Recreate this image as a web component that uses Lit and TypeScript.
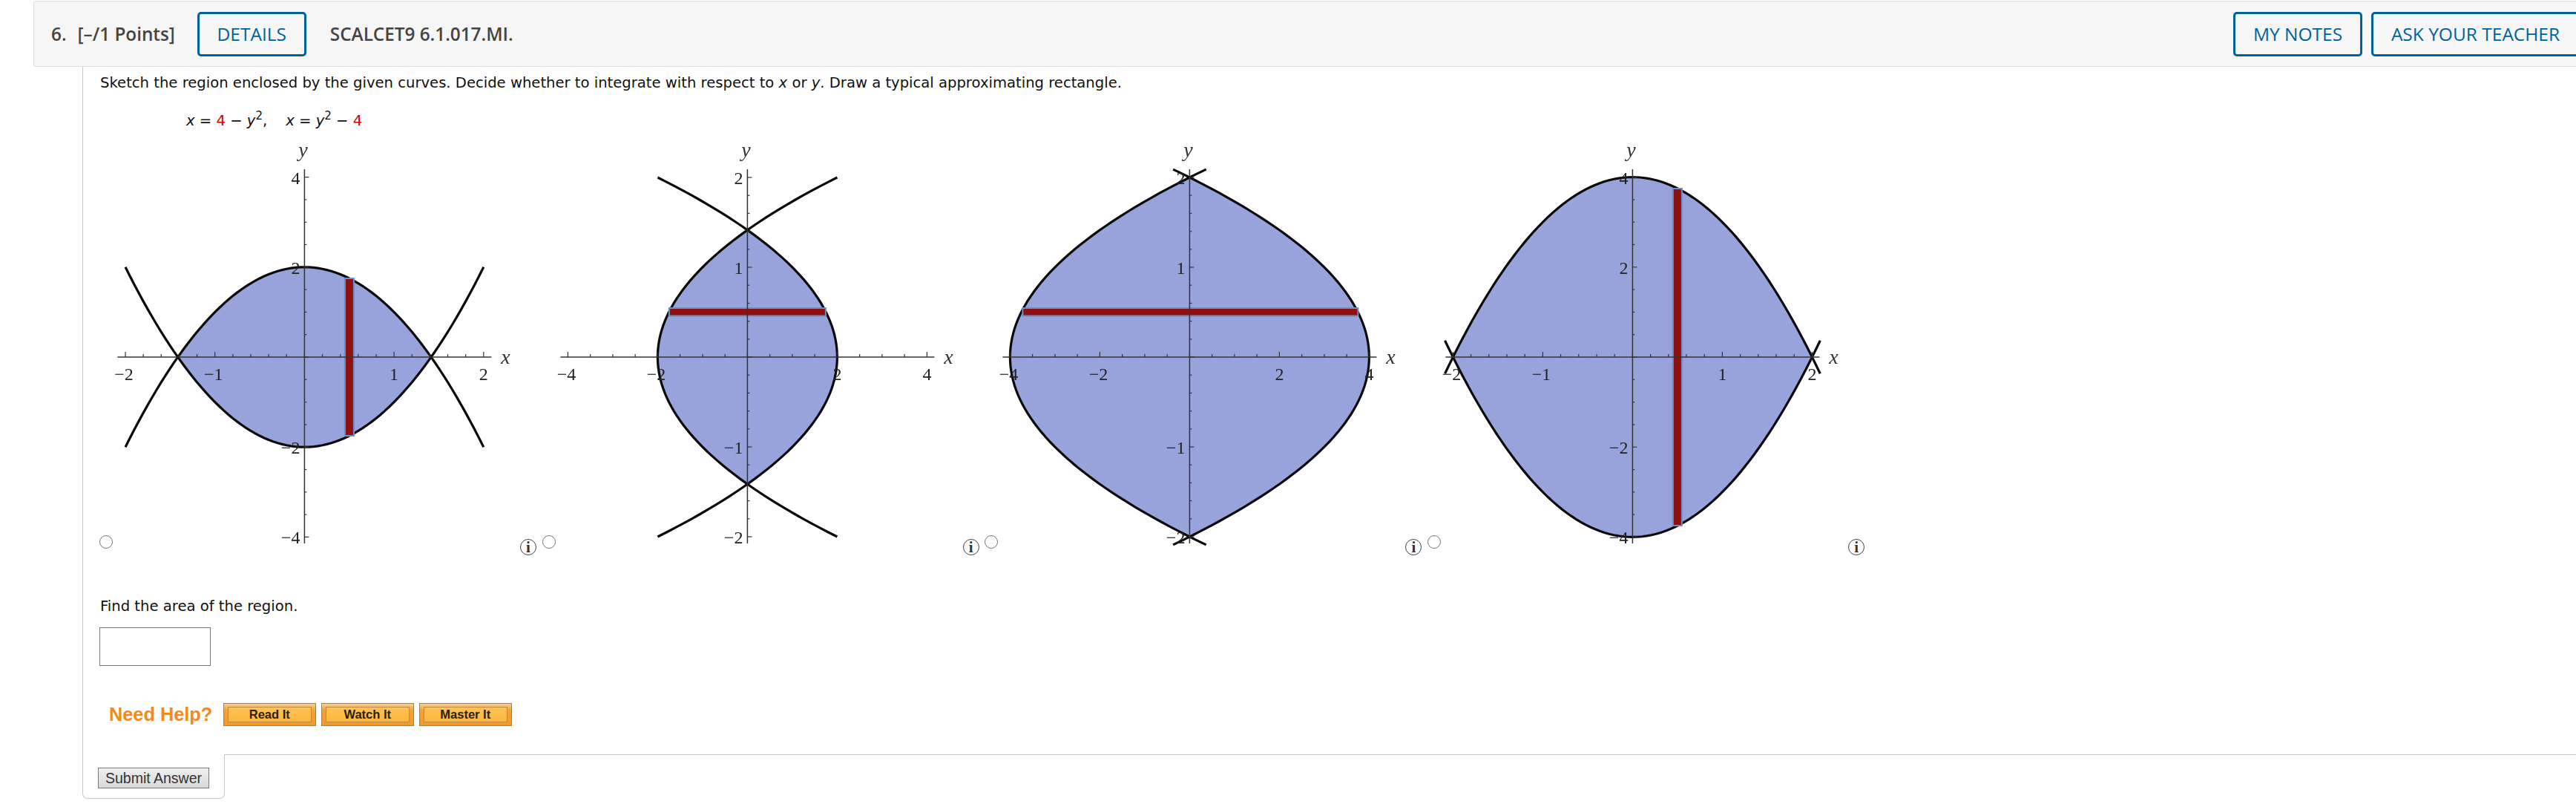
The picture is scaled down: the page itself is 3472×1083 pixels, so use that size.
/**
 * Homework question: sketch the region enclosed by two parabolas
 */

import { LitElement, css, html, svg } from "lit";
import { customElement } from "lit/decorators.js";

interface Plot {
	// "y" means y = a - x^2 over x, "x" means x = a - y^2 over y
	along: "x" | "y";
	a: number;
	range: number;
	sx: number;
	sy: number;
	xMinor: number;
	yMinor: number;
	xLabels: number[];
	yLabels: number[];
	bar: [number, number, number, number];
}

const CX = 258.4;
const CY = 297;
const LEFT = -252;
const RIGHT = 252;
const TOP = -253;
const BOTTOM = 251;

const PLOTS: Plot[] = [
	{
		along: "y",
		a: 2,
		range: 2,
		sx: 120.7,
		sy: 60.6,
		xMinor: 0.2,
		yMinor: 0.5,
		xLabels: [-2, -1, 1, 2],
		yLabels: [-4, -2, 2, 4],
		bar: [55.5, -105, 10, 210],
	},
	{
		along: "x",
		a: 2,
		range: 2,
		sx: 60.5,
		sy: 121,
		xMinor: 0.5,
		yMinor: 0.2,
		xLabels: [-4, -2, 2, 4],
		yLabels: [-2, -1, 1, 2],
		bar: [-104.5, -65, 209, 8.5],
	},
	{
		along: "x",
		a: 4,
		range: 2.09,
		sx: 60.5,
		sy: 121,
		xMinor: 0.5,
		yMinor: 0.2,
		xLabels: [-4, -2, 2, 4],
		yLabels: [-2, -1, 1, 2],
		bar: [-224, -65, 450, 8.5],
	},
	{
		along: "y",
		a: 4,
		range: 2.09,
		sx: 121,
		sy: 60.6,
		xMinor: 0.2,
		yMinor: 0.5,
		xLabels: [-2, -1, 1, 2],
		yLabels: [-4, -2, 2, 4],
		bar: [55.5, -226, 10, 452],
	},
];

function ticks(max: number, step: number) {
	const out: number[] = [];
	const n = Math.floor(max / step + 0.001);
	for (let i = -n; i <= n; i++) out.push(i * step);
	return out;
}

function curve(p: Plot, sign: number, from: number, to: number) {
	const pts: string[] = [];
	for (let i = 0; i <= 80; i++) {
		const t = from + ((to - from) * i) / 80;
		const v = sign * (p.a - t * t);
		const px = p.along === "y" ? t * p.sx : v * p.sx;
		const py = p.along === "y" ? -v * p.sy : -t * p.sy;
		pts.push(`${px.toFixed(2)},${py.toFixed(2)}`);
	}
	return pts;
}

function renderPlot(p: Plot) {
	const root = Math.sqrt(p.a);
	const region = [...curve(p, 1, -root, root), ...curve(p, -1, root, -root)].join(" ");
	const xMax = p.along === "y" ? 2 : 4;
	const yMax = p.along === "y" ? 4 : 2;
	const [bx, by, bw, bh] = p.bar;
	return html`
		<svg class="plot" width="549" height="564" viewBox="0 0 549 564">
			<g transform="translate(${CX} ${CY})">
				${svg`
					<polygon points=${region} fill="#99a3db"></polygon>
					<polyline class="curve" points=${curve(p, 1, -p.range, p.range).join(" ")}></polyline>
					<polyline class="curve" points=${curve(p, -1, -p.range, p.range).join(" ")}></polyline>
					<rect x=${bx - 2} y=${by - 2} width=${bw + 4} height=${bh + 4} fill="#6f8fc4"></rect>
					<rect x=${bx} y=${by} width=${bw} height=${bh} fill="#8f1010"></rect>
					<line class="axis" x1=${LEFT} x2=${RIGHT} y1="0" y2="0"></line>
					<line class="axis" x1="0" x2="0" y1=${TOP} y2=${BOTTOM}></line>
					${ticks(xMax, p.xMinor).map((t) => {
						const major = Math.abs(t - Math.round(t)) < 0.001 && (p.along === "y" || Math.round(t) % 2 === 0);
						return svg`<line class="tick" x1=${t * p.sx} x2=${t * p.sx} y1="0" y2=${major ? -7 : -4}></line>`;
					})}
					${ticks(yMax, p.yMinor).map((t) => {
						const major = Math.abs(t - Math.round(t)) < 0.001 && (p.along === "x" || Math.round(t) % 2 === 0);
						return svg`<line class="tick" x1="0" x2=${major ? 6 : 3} y1=${-t * p.sy} y2=${-t * p.sy}></line>`;
					})}
					${p.xLabels.map(
						(v) => svg`<text class="num" x=${v * p.sx - (v < 0 ? 2 : 0)} y="31" text-anchor="middle">${v < 0 ? "−" : ""}${Math.abs(v)}</text>`,
					)}
					${p.yLabels.map(
						(v) => svg`<text class="num" x="-6" y=${-v * p.sy + 9} text-anchor="end">${v < 0 ? "−" : ""}${Math.abs(v)}</text>`,
					)}
					<text class="var" x="271" y="9" text-anchor="middle">x</text>
					<text class="var" x="-2" y="-270" text-anchor="middle">y</text>
				`}
			</g>
		</svg>
	`;
}

@customElement("app-root")
export class AppRoot extends LitElement {
	static styles = css`
		:host {
			display: block;
			width: 3472px;
			height: 1083px;
			overflow: hidden;
			background: #fff;
			font-family: "DejaVu Sans", sans-serif;
			font-size: 19.6px;
			color: #111;
		}

		.header {
			display: flex;
			align-items: center;
			box-sizing: border-box;
			width: 3445px;
			height: 89px;
			margin: 1px 0 0 45px;
			padding: 0 12px 0 23px;
			background: #f6f6f6;
			border: 1px solid #ddd;
			border-radius: 3px;
			font-family: "Open Sans", sans-serif;
			font-size: 24.3px;
			font-weight: 600;
			color: #444;
		}

		.num-label {
			margin-right: 15px;
		}

		.points {
			margin-right: 30px;
		}

		.code {
			margin-left: 32px;
		}

		.spacer {
			flex: 1;
		}

		.btn {
			display: flex;
			align-items: center;
			justify-content: center;
			box-sizing: border-box;
			height: 60px;
			border: 3px solid #00629b;
			border-radius: 5px;
			color: #00629b;
			font-size: 24.5px;
			font-weight: 500;
		}

		.btn.details {
			flex: none;
			width: 147px;
		}

		.btn.notes {
			flex: none;
			width: 174px;
			margin-right: 12px;
		}

		.btn.ask {
			flex: none;
			width: 281px;
		}

		.main {
			margin-left: 111px;
			padding: 10px 0 38px 23px;
			border-left: 1px solid #c8c8c8;
		}

		.line {
			line-height: 24px;
		}

		.line i {
			font-style: oblique;
		}

		.formula {
			margin-top: 27px;
			padding-left: 116px;
			white-space: pre;
		}

		.red {
			color: #d40000;
		}

		sup {
			font-size: 15px;
			line-height: 0;
		}

		.choices {
			display: flex;
			margin: 9px 0 0 -1px;
		}

		.choice {
			display: flex;
			align-items: flex-end;
			width: 596.7px;
			flex: none;
		}

		.choice input {
			width: 18px;
			height: 18px;
			margin: 0 0 9px;
		}

		.plot {
			display: block;
			flex: none;
			filter: blur(0.4px);
		}

		.curve {
			fill: none;
			stroke: #0a0a0a;
			stroke-width: 3.2;
		}

		.axis {
			stroke: #333;
			stroke-width: 1.5;
		}

		.tick {
			stroke: #333;
			stroke-width: 1.2;
		}

		.num {
			font-family: "Liberation Serif", serif;
			font-size: 24px;
			fill: #222;
		}

		.var {
			font-family: "Liberation Serif", serif;
			font-size: 28px;
			font-style: italic;
			fill: #333;
		}

		.info {
			display: flex;
			align-items: center;
			justify-content: center;
			box-sizing: border-box;
			width: 22px;
			height: 22px;
			border: 1px solid #444;
			border-radius: 50%;
			font-family: "Liberation Serif", serif;
			font-size: 21px;
			font-weight: 700;
			color: #333;
			flex: none;
		}

		.find {
			margin-top: 57px;
		}

		.answer {
			display: block;
			box-sizing: border-box;
			width: 150px;
			height: 52px;
			margin: 16px 0 0 -1px;
			border: 1px solid #767676;
			background: #fff;
		}

		.help {
			display: flex;
			align-items: center;
			margin: 50px 0 0 12px;
		}

		.need {
			width: 154px;
			font-family: "Liberation Sans", sans-serif;
			font-size: 25.3px;
			font-weight: 700;
			color: #f28a1c;
		}

		.help-btn {
			display: flex;
			box-sizing: border-box;
			width: 124.5px;
			height: 31px;
			margin-right: 7.5px;
			padding: 4px 5px;
			border: 1px solid #b97a2c;
			background: linear-gradient(#fbcf94, #f3a23a 30%, #f09a2e);
		}

		.help-btn span {
			flex: 1;
			display: flex;
			align-items: center;
			justify-content: center;
			border: 1px solid #bd8a45;
			background: linear-gradient(#fdc255, #fdb83d);
			font-family: "Liberation Sans", sans-serif;
			font-size: 16.5px;
			font-weight: 700;
			color: #2a2008;
		}

		.footer {
			display: flex;
			margin-left: 111px;
		}

		.submit-cell {
			box-sizing: border-box;
			width: 192px;
			height: 60px;
			padding: 18px 0 0 20px;
			border: 1px solid #c8c8c8;
			border-top: none;
			border-radius: 0 0 7px 7px;
		}

		.submit {
			box-sizing: border-box;
			display: block;
			width: 150px;
			height: 28px;
			padding: 0;
			border: 1px solid #777;
			background: linear-gradient(#efefef, #d9d9d9);
			font-family: "Liberation Sans", sans-serif;
			font-size: 19.5px;
			color: #333;
		}

		.rest {
			flex: 1;
			border-top: 1px solid #c8c8c8;
		}
	`;

	render() {
		return html`
			<div class="header">
				<span class="num-label">6.</span>
				<span class="points">[–/1 Points]</span>
				<div class="btn details">DETAILS</div>
				<span class="code">SCALCET9 6.1.017.MI.</span>
				<div class="spacer"></div>
				<div class="btn notes">MY NOTES</div>
				<div class="btn ask">ASK YOUR TEACHER</div>
			</div>
			<div class="main">
				<div class="line">
					Sketch the region enclosed by the given curves. Decide whether to integrate with respect to <i>x</i> or
					<i>y</i>. Draw a typical approximating rectangle.
				</div>
				<div class="line formula"><i>x</i> = <span class="red">4</span> − <i>y</i><sup>2</sup>,    <i>x</i> = <i>y</i><sup>2</sup> − <span class="red">4</span></div>
				<div class="choices">
					${PLOTS.map(
						(p) => html`
							<div class="choice">
								<input type="radio" name="region" />
								${renderPlot(p)}
								<span class="info">i</span>
							</div>
						`,
					)}
				</div>
				<div class="line find">Find the area of the region.</div>
				<input class="answer" type="text" />
				<div class="help">
					<span class="need">Need Help?</span>
					<div class="help-btn"><span>Read It</span></div>
					<div class="help-btn"><span>Watch It</span></div>
					<div class="help-btn"><span>Master It</span></div>
				</div>
			</div>
			<div class="footer">
				<div class="submit-cell"><button class="submit">Submit Answer</button></div>
				<div class="rest"></div>
			</div>
		`;
	}
}
